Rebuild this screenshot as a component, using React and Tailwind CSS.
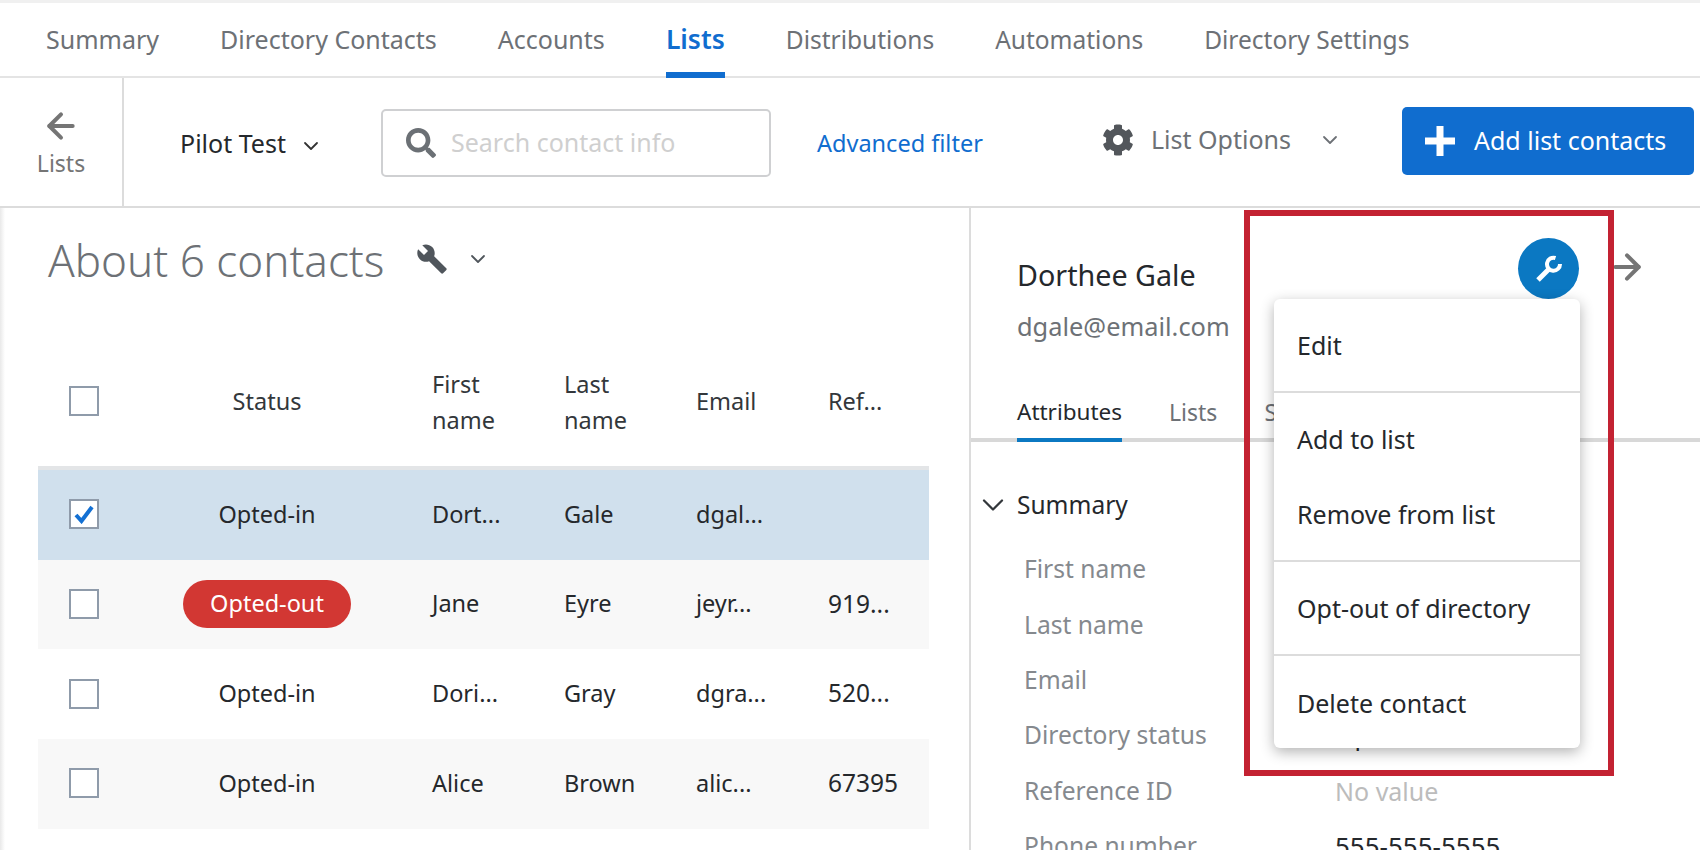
import React from 'react';
import { ArrowLeft, ArrowRight, ChevronDown } from 'lucide-react';
import { FaCog, FaSearch } from 'react-icons/fa';

const TABS = ['Summary', 'Directory Contacts', 'Accounts', 'Lists', 'Distributions', 'Automations', 'Directory Settings'];

const ROWS = [
  { status: 'Opted-in', first: 'Dort...', last: 'Gale', email: 'dgal...', ref: '', checked: true, bg: 'bg-[#d0e0ed]' },
  { status: 'Opted-out', first: 'Jane', last: 'Eyre', email: 'jeyr...', ref: '919...', bg: 'bg-[#f8f8f8]' },
  { status: 'Opted-in', first: 'Dori...', last: 'Gray', email: 'dgra...', ref: '520...', bg: 'bg-white' },
  { status: 'Opted-in', first: 'Alice', last: 'Brown', email: 'alic...', ref: '67395', bg: 'bg-[#f8f8f8]' },
];

const FIELDS = [
  ['First name', 'Dorthee'],
  ['Last name', 'Gale'],
  ['Email', 'dgale@email.com'],
  ['Directory status', 'Opted-in'],
  ['Reference ID', 'No value'],
  ['Phone number', '555-555-5555'],
];

const MENU = [['Edit'], ['Add to list', 'Remove from list'], ['Opt-out of directory'], ['Delete contact']];

const Checkbox = ({ checked }) => (
  <div className="w-[30px] h-[30px] border-2 border-[#8f9baa] bg-white flex items-center justify-center">
    {checked && (
      <svg width="22" height="20" viewBox="0 0 22 20" fill="none">
        <path d="M3 11l5.5 6L19 3" stroke="#1370d3" strokeWidth="4" />
      </svg>
    )}
  </div>
);

const App = () => {
  return (
    <div className="relative w-[1700px] h-[850px] overflow-hidden bg-white text-[25px] font-['Noto_Sans','Open_Sans',sans-serif] text-[#25282c]">
      <nav className="flex h-[78px] items-end gap-[61px] border-t-[3px] border-b-2 border-t-[#f0f0f0] border-b-[#e4e4e4] pl-[46px]">
        {TABS.map((tab, i) => (
          <div
            key={tab}
            className={
              tab === 'Lists'
                ? 'h-[73px] w-[59px] -mb-[2px] pt-[16px] border-b-[6px] border-[#106dcf] text-center text-[26.5px] leading-[36px] font-semibold text-[#106dcf]'
                : i > 3
                  ? 'h-[73px] -mb-[2px] pt-[17px] text-[24.5px] text-[#6d7176]'
                  : 'h-[73px] -mb-[2px] pt-[16px] text-[#6d7176]'
            }
          >
            {tab}
          </div>
        ))}
      </nav>

      <div className="flex h-[130px] border-b-2 border-[#dcdcdc]">
        <div className="w-[124px] shrink-0 border-r-2 border-[#dcdcdc] flex flex-col items-center pt-[28px] text-[#757575]">
          <ArrowLeft size={40} strokeWidth={2.4} />
          <span className="mt-[1px] text-[23px] leading-[32px]">Lists</span>
        </div>
        <div className="flex items-center pl-[56px] pt-[4px]">
          <span className="w-[119px] whitespace-nowrap">Pilot Test</span>
          <ChevronDown size={24} strokeWidth={1.8} className="mt-[3px] text-[#333]" />
        </div>
        <div className="ml-[58px] mt-[31px] h-[68px] w-[390px] border-2 border-[#cfd0d2] rounded-[5px] flex items-center pl-[23px]">
          <FaSearch size={30} className="text-[#6b7075]" />
          <span className="ml-[15px] text-[#cfcfcf]">Search contact info</span>
        </div>
        <div className="ml-[46px] w-[164px] shrink-0 whitespace-nowrap flex items-center pt-[4px] text-[#106dcf] text-[23.5px]">Advanced filter</div>
        <div className="ml-[121px] flex items-center pb-[4px]">
          <FaCog size={32} className="text-[#52565b]" />
          <span className="ml-[17px] w-[138px] shrink-0 whitespace-nowrap text-[#6d7176]">List Options</span>
          <ChevronDown size={24} strokeWidth={1.8} className="ml-[29px] text-[#6d7176]" />
        </div>
        <div className="ml-[60px] mt-[29px] h-[68px] w-[292px] rounded-[5px] bg-[#106dcf] text-white flex items-center pl-[22px]">
          <svg width="32" height="32" viewBox="0 0 32 32" fill="#fff">
            <path d="M12.5 1h7v11.5H31v7H19.5V31h-7V19.5H1v-7h11.5z" />
          </svg>
          <span className="ml-[18px] whitespace-nowrap">Add list contacts</span>
        </div>
      </div>

      <div className="flex h-[642px]">
        <div className="w-[5px] shrink-0 bg-gradient-to-r from-[#e9e9e9] to-white" />
        <div className="w-[966px] shrink-0 border-r-2 border-[#dcdcdc]">
          <div className="mt-[24px] ml-[43px] flex items-center h-[56px]">
            <h2 className="text-[44px] font-light leading-[56px] text-[#6d7176]">About 6 contacts</h2>
            <svg width="32" height="32" viewBox="0 0 24 24" fill="#50565c" className="ml-[32px] -mt-[2px]">
              <path d="M22.7 19l-9.1-9.1c.9-2.3.4-5-1.5-6.9-2-2-5-2.4-7.4-1.3L9 6 6 9 1.6 4.7C.4 7.1.9 10.1 2.9 12.1c1.9 1.9 4.6 2.4 6.9 1.5l9.1 9.1c.4.4 1 .4 1.4 0l2.3-2.3c.5-.4.5-1.1.1-1.4z" />
            </svg>
            <ChevronDown size={24} strokeWidth={1.8} className="ml-[18px] -mt-[2px] text-[#50565c]" />
          </div>

          <div className="ml-[33px] mt-[48px] w-[891px]">
            <div className="grid grid-cols-[77px_304px_132px_132px_132px_114px] h-[134px] items-center border-b-4 border-[#e3e5e7] text-[23.5px] leading-[36px] text-[#33373b]">
              <div className="pl-[31px]"><Checkbox /></div>
              <div className="text-center">Status</div>
              <div className="pl-[13px] mt-[2px]">First<br />name</div>
              <div className="pl-[13px] mt-[2px]">Last<br />name</div>
              <div className="pl-[13px]">Email</div>
              <div className="pl-[13px]">Ref...</div>
            </div>
            {ROWS.map((row) => (
              <div key={row.first} className={`grid grid-cols-[77px_304px_132px_132px_132px_114px] h-[89.7px] pb-[1px] items-center text-[23.5px] ${row.bg}`}>
                <div className="pl-[31px]"><Checkbox checked={row.checked} /></div>
                <div className="flex justify-center">
                  {row.status === 'Opted-out' ? (
                    <span className="w-[168px] h-[48px] rounded-[24px] bg-[#d23733] text-white flex items-center justify-center">{row.status}</span>
                  ) : (
                    row.status
                  )}
                </div>
                <div className="pl-[13px]">{row.first}</div>
                <div className="pl-[13px]">{row.last}</div>
                <div className="pl-[13px]">{row.email}</div>
                <div className="pl-[13px] text-[24.5px]">{row.ref}</div>
              </div>
            ))}
          </div>
        </div>

        <div className="flex-1 pt-[30px]">
          <div className="flex pl-[46px]">
            <div className="w-[501px] shrink-0">
              <div className="mt-[19px] text-[28.7px] leading-[36px]">Dorthee Gale</div>
              <div className="mt-[17px] text-[25.4px] leading-[32px] text-[#6d7176]">dgale@email.com</div>
            </div>
            <div className="w-[61px] h-[61px] shrink-0 rounded-full bg-[#0b78c2] flex items-center justify-center">
              <svg width="28" height="28" viewBox="0 0 28 28" fill="none" stroke="#fff">
                <path d="M3 25L15 13" strokeWidth="5" />
                <path d="M20.5 3A6.5 6.5 0 1 0 25 9" strokeWidth="4" />
              </svg>
            </div>
            <ArrowRight size={40} strokeWidth={2.4} className="ml-[28px] mt-[9px] text-[#757575]" />
          </div>

          <div className="mt-[53px] flex gap-[47px] pl-[46px] border-b-4 border-[#d8d8d8] h-[47px] text-[23px]">
            <div className="h-[47px] pt-[1px] border-b-4 border-[#0b78c2] leading-[32px] text-[22.5px]">Attributes</div>
            <div className="pt-[1px] leading-[32px] text-[#6d7176]">Lists</div>
            <div className="pt-[1px] leading-[32px] text-[#6d7176]">Statistics</div>
          </div>

          <div className="mt-[47px] flex items-center h-[32px] pl-[4px]">
            <ChevronDown size={36} strokeWidth={1.5} className="text-[#33373b]" />
            <span className="ml-[6px] text-[24.5px]">Summary</span>
          </div>
          <div className="mt-[21px] pl-[53px]">
            {FIELDS.map(([label, value]) => (
              <div key={label} className="flex items-center h-[55.4px]">
                <span className="w-[311px] shrink-0 text-[24.6px] text-[#85898e]">{label}</span>
                <span className={value === 'No value' ? 'text-[#bcbcbc]' : value === '555-555-5555' ? 'text-[26px]' : ''}>{value}</span>
              </div>
            ))}
          </div>
        </div>
      </div>

      {/* dropdown opened from the wrench button */}
      <div className="absolute left-[1274px] top-[299px] w-[306px] h-[449px] rounded-[6px] bg-white shadow-[0_4px_14px_rgba(0,0,0,0.3)] divide-y-2 divide-[#dcdcdc]">
        {MENU.map((group) => (
          <div key={group[0]} className="py-[8px] last:pt-[9px]">
            {group.map((item) => (
              <div key={item} className="h-[75.7px] pt-[2px] flex items-center pl-[23px]">{item}</div>
            ))}
          </div>
        ))}
      </div>

      {/* red annotation frame */}
      <div className="absolute left-[1244px] top-[210px] w-[370px] h-[566px] border-[6px] border-[#c32232] pointer-events-none" />
    </div>
  );
};

export default App;
